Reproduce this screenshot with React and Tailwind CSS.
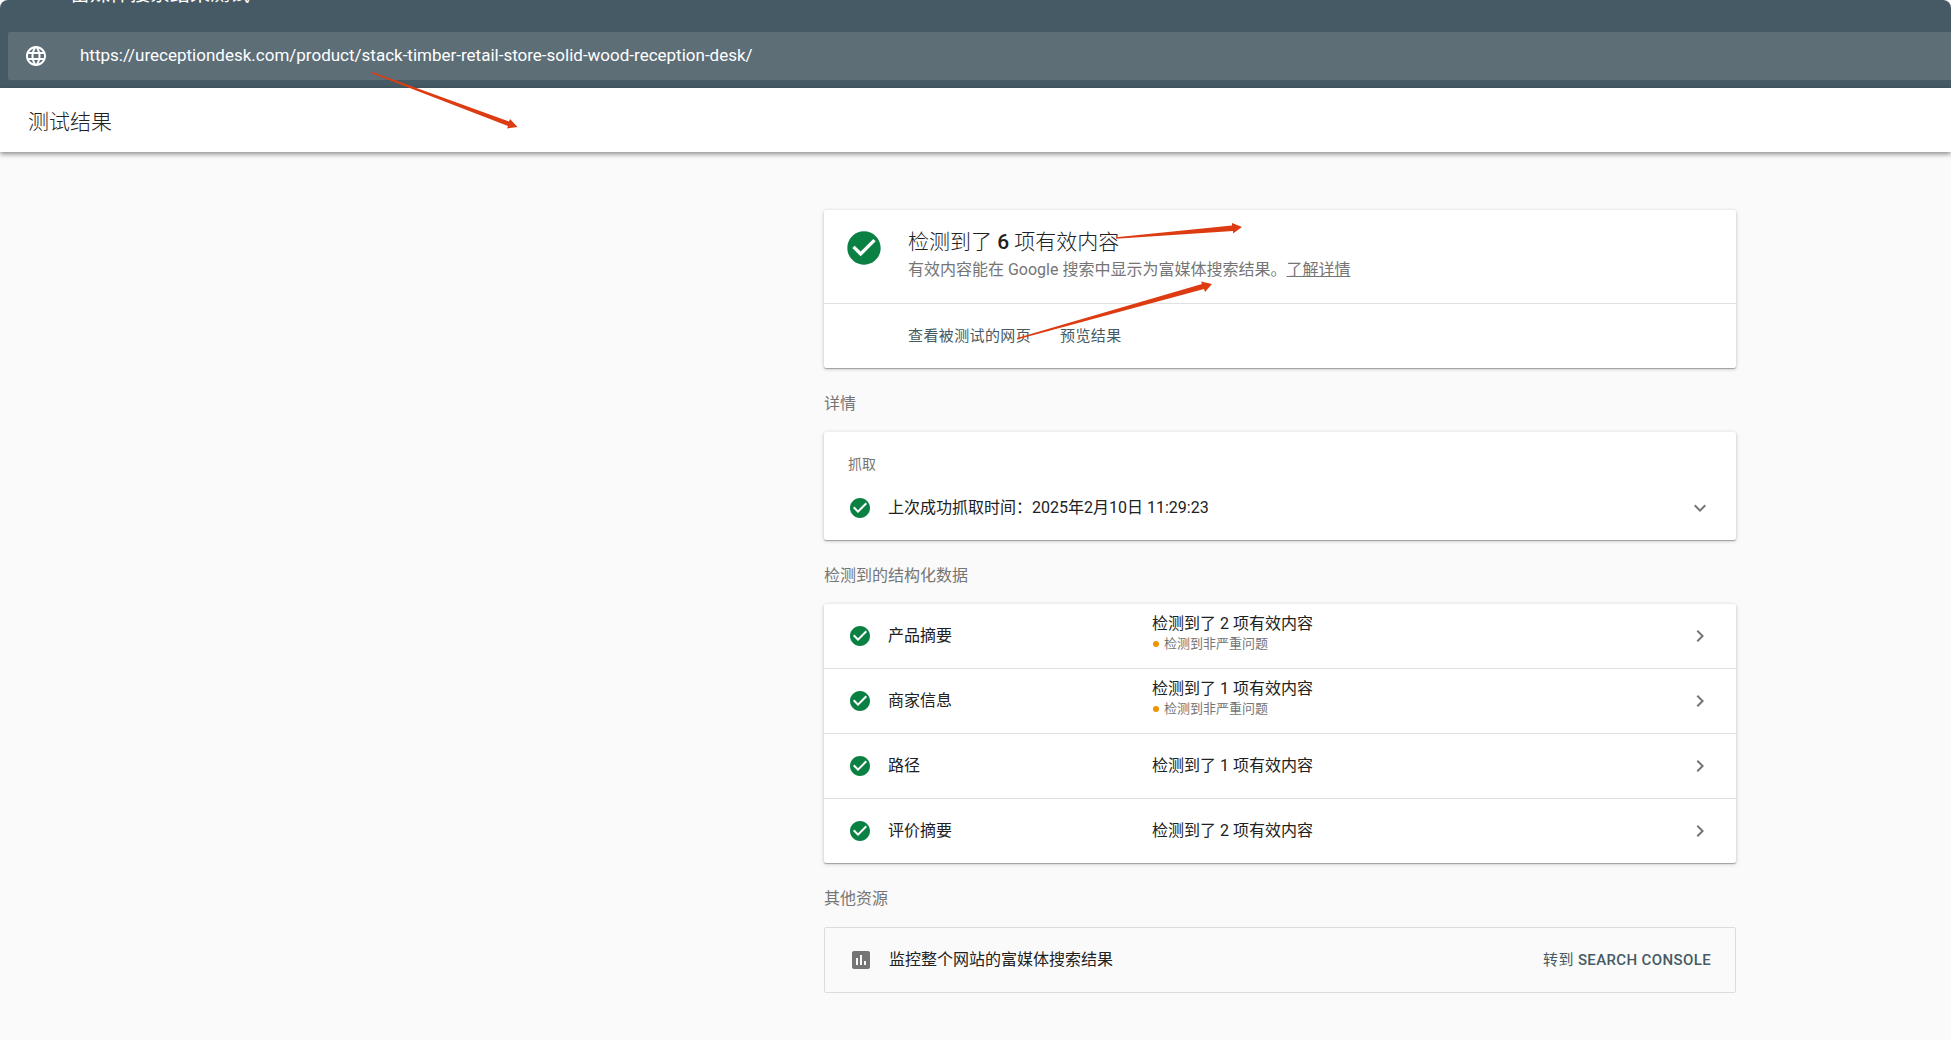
import React from 'react'
import { MdCheckCircle, MdChevronRight, MdExpandMore, MdInsertChart, MdLanguage } from 'react-icons/md'

const results = [
  { name: '产品摘要', count: 2, warning: true },
  { name: '商家信息', count: 1, warning: true },
  { name: '路径', count: 1, warning: false },
  { name: '评价摘要', count: 2, warning: false },
]

const CARD = 'bg-white rounded-[2px] shadow-[0_1px_4px_rgba(0,0,0,0.2),0_1px_1px_rgba(0,0,0,0.28)]'

function SectionTitle({ children }) {
  return <h2 className="text-base leading-6 text-[#757575] mt-6 mb-4">{children}</h2>
}

// hand drawn arrows lying over the page
function Arrows() {
  return (
    <svg className="absolute top-0 left-0 pointer-events-none" width="1300" height="400" fill="#dd3c12" aria-hidden="true">
      <path d="M371 71.5L509 121.5L510 119L517.5 127L507 128.5L508 126L371 73Z" />
      <path d="M1116 237.3L1232 225.5L1232 223L1242 227L1233 233.5L1233 231L1116 238.8Z" />
      <path d="M1017 338L1202 284L1201 281.5L1212 284L1205 292L1204 289L1017 339.5Z" />
    </svg>
  )
}

export default function App() {
  return (
    <div className="relative min-h-screen bg-white font-['Roboto','Noto_Sans_CJK_SC',sans-serif] text-[#212121]">
      <header className="bg-[#455a64] rounded-t-lg overflow-hidden pb-2">
        <h1 className="-mt-[18px] pl-[70px] text-xl leading-6 text-white">富媒体搜索结果测试</h1>
        <div className="mt-[26px] ml-2 h-12 flex items-center gap-8 pl-4 bg-[#5d6e77] rounded-l-[2px] text-white">
          <MdLanguage size={24} />
          <input
            type="text"
            aria-label="网址"
            className="flex-1 text-[17px] outline-none"
            defaultValue="https://ureceptiondesk.com/product/stack-timber-retail-store-solid-wood-reception-desk/"
          />
        </div>
      </header>

      <div className="relative h-16 flex items-center pl-7 pt-1 bg-white shadow-[0_2px_5px_rgba(0,0,0,0.45)]">
        <h2 className="text-[21px] leading-7 font-light text-[#212121]">测试结果</h2>
      </div>

      <main className="min-h-[calc(100vh-152px)] bg-[#fafafa] pt-[58px] pb-12 pr-[215px]">
        <div className="ml-auto w-full max-w-[912px]">
          <section className={CARD}>
            <div className="flex gap-6 pl-5 pt-[18px] pb-[19px] border-b border-[#e0e0e0]">
              <MdCheckCircle size={40} className="text-[#0b8043]" />
              <div>
                <h3 className="text-[21px] leading-7 font-light">
                  检测到了 <span className="font-medium">6</span> 项有效内容
                </h3>
                <p className="text-base leading-7 text-[#757575]">
                  有效内容能在 Google 搜索中显示为富媒体搜索结果。
                  <a href="#" className="underline">了解详情</a>
                </p>
              </div>
            </div>
            <div className="h-16 flex items-center gap-[29px] pl-[84px] text-[15px] tracking-wide text-[#455a64]">
              <button type="button">查看被测试的网页</button>
              <button type="button">预览结果</button>
            </div>
          </section>

          <SectionTitle>详情</SectionTitle>
          <section className={CARD}>
            <h3 className="pl-6 pt-[22px] pb-0.5 text-sm leading-5 text-[#757575]">抓取</h3>
            <button type="button" className="w-full h-16 flex items-center pl-6 pr-6 text-left">
              <MdCheckCircle size={24} className="text-[#0b8043]" />
              <span className="flex-1 pl-4">上次成功抓取时间：2025年2月10日 11:29:23</span>
              <MdExpandMore size={24} className="text-[#757575]" />
            </button>
          </section>

          <SectionTitle>检测到的结构化数据</SectionTitle>
          <section className={`${CARD} divide-y divide-[#e0e0e0]`}>
            {results.map((item) => (
              <button key={item.name} type="button" className="w-full h-[65px] last:h-16 flex items-center px-6 text-left">
                <MdCheckCircle size={24} className="text-[#0b8043]" />
                <span className="w-[280px] pl-4">{item.name}</span>
                <span className="flex-1">
                  <span className="block leading-6">检测到了 {item.count} 项有效内容</span>
                  {item.warning && (
                    <span className="flex items-center gap-[5px] pb-2 pl-px text-[13px] leading-4 text-[#757575]">
                      <span className="size-1.5 rounded-full bg-[#f09300]" />
                      检测到非严重问题
                    </span>
                  )}
                </span>
                <MdChevronRight size={24} className="text-[#757575]" />
              </button>
            ))}
          </section>

          <SectionTitle>其他资源</SectionTitle>
          <section className="h-[66px] flex items-center px-6 border border-[#dadce0] rounded-[2px]">
            <MdInsertChart size={24} className="text-[#757575]" />
            <span className="flex-1 pl-4">监控整个网站的富媒体搜索结果</span>
            <a href="#" className="text-[15px] tracking-wide text-[#455a64]">
              转到 <span className="font-medium">SEARCH CONSOLE</span>
            </a>
          </section>
        </div>
      </main>

      <Arrows />
    </div>
  )
}
